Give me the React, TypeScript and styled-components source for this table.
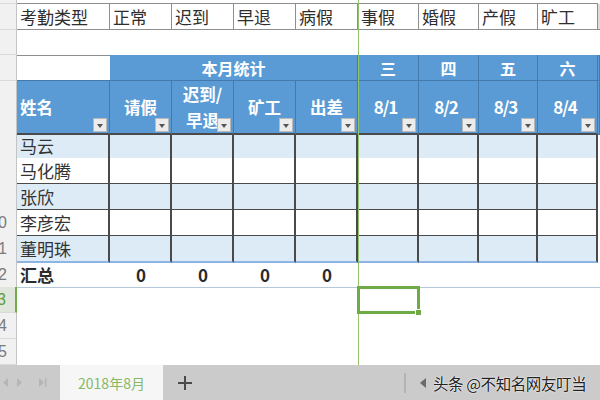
import React from "react";
import styled, { createGlobalStyle, css } from "styled-components";

const GlobalStyle = createGlobalStyle`
  html, body { margin: 0; padding: 0; background: #ffffff; }
  body { font-family: "Noto Sans CJK SC", "Noto Sans", sans-serif; }
  #root { width: 600px; height: 400px; overflow: hidden; }
  * { box-sizing: border-box; }
`;

const COLS = "17px 93px 62px 62px 62px 62px 61px 60px 59px 60px 1fr";
const BLUE = "#5b9bd5";
const HEAD_LINE = "#4479ad";
const GRID_LINE = "#4a4a4a";
const TOP_LINE = "#8e8e8e";

const Screen = styled.div`
  width: 600px;
  height: 400px;
  display: flex;
  flex-direction: column;
  overflow: hidden;
  background: #ffffff;
`;

const Sheet = styled.div`
  position: relative;
  height: 365px;
  display: flex;
  flex-direction: column;
  flex: none;
`;

const Row = styled.div<{ $h: number }>`
  display: grid;
  grid-template-columns: ${COLS};
  height: ${(p) => p.$h}px;
  flex: none;
`;

const RowHead = styled.div<{ $active?: boolean }>`
  display: flex;
  align-items: center;
  justify-content: flex-end;
  padding-right: 9px;
  overflow: hidden;
  white-space: nowrap;
  font-family: "Liberation Sans", sans-serif;
  font-size: 16px;
  color: ${(p) => (p.$active ? "#5e9c3a" : "#7a7a7a")};
  background: ${(p) => (p.$active ? "#e1e6dc" : "#f1f1f1")};
  border-right: ${(p) => (p.$active ? "2px solid #70ad47" : "1px solid #c4c4c4")};
  border-bottom: 1px solid #dadada;
`;

const Blank = styled.div<{ $bottom?: boolean; $span?: string }>`
  ${(p) => p.$span && css`grid-column: ${p.$span};`}
  ${(p) => p.$bottom && css`border-bottom: 1px solid ${TOP_LINE};`}
`;

const TypeCell = styled.div<{ $shade?: boolean }>`
  display: flex;
  align-items: center;
  padding-left: 3px;
  overflow: hidden;
  white-space: nowrap;
  font-size: 17px;
  color: #2e2e2e;
  background: ${(p) => (p.$shade ? "#dcdcdc" : "#ffffff")};
  border-right: 1px solid ${TOP_LINE};
  border-bottom: 1px solid ${TOP_LINE};
`;

const CornerCell = styled.div`
  background: #ffffff;
  border-top: 1px solid ${TOP_LINE};
  border-bottom: 1px solid ${HEAD_LINE};
`;

const BlueCell = styled.div<{ $span?: string }>`
  position: relative;
  display: flex;
  align-items: center;
  justify-content: center;
  background: ${BLUE};
  color: #ffffff;
  font-weight: 700;
  font-size: 16px;
  white-space: nowrap;
  border-right: 1px solid ${HEAD_LINE};
  border-bottom: 1px solid ${HEAD_LINE};
  ${(p) => p.$span && css`grid-column: ${p.$span};`}
`;

const FieldHead = styled(BlueCell)<{ $left?: boolean; $num?: boolean }>`
  justify-content: ${(p) => (p.$left ? "flex-start" : "center")};
  padding-left: ${(p) => (p.$left ? "3px" : "0")};
  padding-right: ${(p) => (p.$num ? "5px" : "0")};
  text-align: center;
  line-height: 26px;
  font-size: ${(p) => (p.$num ? "17px" : "16.5px")};
  letter-spacing: ${(p) => (p.$num ? "-1px" : "0")};
  border-bottom: 2px solid ${GRID_LINE};
`;

const Dropdown = styled.span`
  position: absolute;
  right: 2px;
  bottom: 1px;
  width: 14px;
  height: 14px;
  background: #ececec;
  border: 1px solid #b9b9b9;
  &::after {
    content: "";
    position: absolute;
    left: 3px;
    top: 5px;
    border-left: 3.5px solid transparent;
    border-right: 3.5px solid transparent;
    border-top: 4px solid #555555;
  }
`;

const NameCell = styled.div<{ $band: boolean; $last?: boolean }>`
  display: flex;
  align-items: center;
  padding-left: 3px;
  font-size: 17px;
  color: #333333;
  white-space: nowrap;
  background: ${(p) => (p.$band ? "#ddebf7" : "#ffffff")};
  border-right: 2px solid ${GRID_LINE};
  border-bottom: ${(p) => (p.$last ? "2px solid #8db4e2" : `2px solid ${GRID_LINE}`)};
`;

const DataCell = styled(NameCell)``;

const SumLabel = styled.div`
  display: flex;
  align-items: center;
  padding-left: 3px;
  font-size: 17px;
  font-weight: 700;
  color: #2b2b2b;
  border-bottom: 1px solid #b7c7da;
`;

const SumValue = styled.div`
  display: flex;
  align-items: center;
  justify-content: center;
  font-size: 17px;
  font-weight: 700;
  color: #2b2b2b;
  border-bottom: 1px solid #b7c7da;
`;

const SumRest = styled.div`
  grid-column: 7 / 12;
  border-bottom: 1px solid #b7c7da;
`;

const FreezeLine = styled.div`
  position: absolute;
  left: 358px;
  top: 0;
  width: 1px;
  height: 365px;
  background: #92c46c;
`;

const Selection = styled.div`
  position: absolute;
  left: 357px;
  top: 286px;
  width: 63px;
  height: 28px;
  border: 3px solid #6eab45;
`;

const FillHandle = styled.span`
  position: absolute;
  right: -5px;
  bottom: -5px;
  width: 7px;
  height: 7px;
  background: #6eab45;
  border: 1px solid #ffffff;
`;

const TabBar = styled.div`
  height: 35px;
  display: flex;
  align-items: stretch;
  background: #cbcbcb;
  flex: none;
`;

const NavGroup = styled.div`
  width: 60px;
  display: flex;
  align-items: center;
  padding-left: 3px;
  gap: 9px;
`;

const SheetTab = styled.div`
  width: 103px;
  display: flex;
  align-items: center;
  justify-content: center;
  background: #f6f6f6;
  color: #86b865;
  font-size: 14px;
  padding-top: 1px;
`;

const AddTab = styled.div`
  width: 44px;
  display: flex;
  align-items: center;
  justify-content: center;
`;

const RightGroup = styled.div`
  margin-left: auto;
  width: 196px;
  display: flex;
  align-items: center;
`;

const Divider = styled.span`
  width: 2px;
  height: 20px;
  background: #b3b3b3;
  margin-right: 14px;
`;

const Watermark = styled.span`
  margin-left: 7px;
  font-size: 15.5px;
  letter-spacing: -0.4px;
  color: #222222;
  white-space: nowrap;
  text-shadow: 0 0 2px #ffffff, 0 0 1px #ffffff;
`;

const NavSvg = styled.svg`
  display: block;
  flex: none;
`;

const Drop = () => <Dropdown />;

const names = ["马云", "马化腾", "张欣", "李彦宏", "董明珠"];
const dataHeights = [25, 26, 26, 26, 26];
const types = ["考勤类型", "正常", "迟到", "早退", "病假", "事假", "婚假", "产假", "旷工"];
const days = ["三", "四", "五", "六"];
const dates = ["8/1", "8/2", "8/3", "8/4"];

export default function App() {
  return (
    <>
      <GlobalStyle />
      <Screen>
        <Sheet>
          <Row $h={4}>
            <RowHead />
            <Blank $bottom $span="2 / 11" />
          </Row>
          <Row $h={26}>
            <RowHead />
            {types.map((t) => (
              <TypeCell key={t}>{t}</TypeCell>
            ))}
            <TypeCell $shade />
          </Row>
          <Row $h={25}>
            <RowHead />
          </Row>
          <Row $h={26}>
            <RowHead />
            <CornerCell />
            <BlueCell $span="3 / 7">本月统计</BlueCell>
            {days.map((d) => (
              <BlueCell key={d}>{d}</BlueCell>
            ))}
            <BlueCell />
          </Row>
          <Row $h={52}>
            <RowHead />
            <FieldHead $left>
              姓名
              <Drop />
            </FieldHead>
            <FieldHead>
              请假
              <Drop />
            </FieldHead>
            <FieldHead>
              迟到/
              <br />
              早退
              <Drop />
            </FieldHead>
            <FieldHead>
              矿工
              <Drop />
            </FieldHead>
            <FieldHead>
              出差
              <Drop />
            </FieldHead>
            {dates.map((d) => (
              <FieldHead key={d} $num>
                {d}
                <Drop />
              </FieldHead>
            ))}
            <BlueCell />
          </Row>
          {names.map((n, i) => (
            <Row key={n} $h={dataHeights[i]}>
              <RowHead>{i === 3 ? "10" : i === 4 ? "11" : ""}</RowHead>
              <NameCell $band={i % 2 === 0} $last={i === 4}>
                {n}
              </NameCell>
              {Array.from({ length: 8 }).map((_, j) => (
                <DataCell key={j} $band={i % 2 === 0} $last={i === 4} />
              ))}
            </Row>
          ))}
          <Row $h={25}>
            <RowHead>12</RowHead>
            <SumLabel>汇总</SumLabel>
            <SumValue>0</SumValue>
            <SumValue>0</SumValue>
            <SumValue>0</SumValue>
            <SumValue>0</SumValue>
            <SumRest />
          </Row>
          <Row $h={26}>
            <RowHead $active>13</RowHead>
          </Row>
          <Row $h={26}>
            <RowHead>14</RowHead>
          </Row>
          <Row $h={26}>
            <RowHead>15</RowHead>
          </Row>

          <FreezeLine />
          <Selection>
            <FillHandle />
          </Selection>
        </Sheet>

        <TabBar>
          <NavGroup>
            <NavSvg width="5" height="9" viewBox="0 0 5 9">
              <path d="M5 0 L0 4.5 L5 9 Z" fill="#b5b5b5" />
            </NavSvg>
            <NavSvg width="5" height="9" viewBox="0 0 5 9">
              <path d="M0 0 L5 4.5 L0 9 Z" fill="#b5b5b5" />
            </NavSvg>
            <NavSvg width="16" height="9" viewBox="0 0 16 9" style={{ marginLeft: 8 }}>
              <path d="M0 0 L5 4.5 L0 9 Z" fill="#b5b5b5" />
              <rect x="6" y="0" width="1.5" height="9" fill="#b5b5b5" />
            </NavSvg>
          </NavGroup>
          <SheetTab>2018年8月</SheetTab>
          <AddTab>
            <NavSvg width="16" height="16" viewBox="0 0 16 16">
              <path d="M8 1 V15 M1 8 H15" stroke="#4a4a4a" strokeWidth="2" />
            </NavSvg>
          </AddTab>
          <RightGroup>
            <Divider />
            <NavSvg width="6" height="10" viewBox="0 0 6 10">
              <path d="M6 0 L0 5 L6 10 Z" fill="#6a6a6a" />
            </NavSvg>
            <Watermark>头条 @不知名网友叮当</Watermark>
          </RightGroup>
        </TabBar>
      </Screen>
    </>
  );
}
